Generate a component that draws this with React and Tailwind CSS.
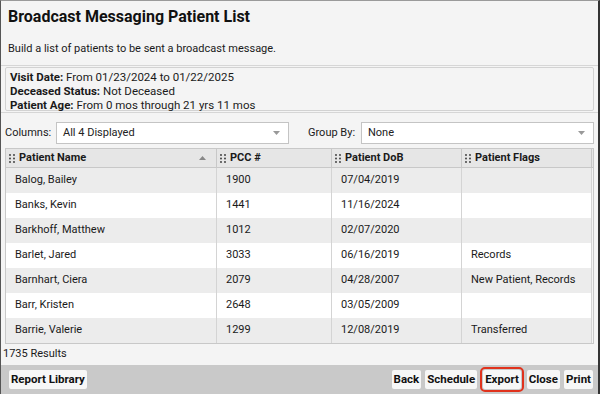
import React from "react";

const ROWS = [
  ["Balog, Bailey", "1900", "07/04/2019", ""],
  ["Banks, Kevin", "1441", "11/16/2024", ""],
  ["Barkhoff, Matthew", "1012", "02/07/2020", ""],
  ["Barlet, Jared", "3033", "06/16/2019", "Records"],
  ["Barnhart, Ciera", "2079", "04/28/2007", "New Patient, Records"],
  ["Barr, Kristen", "2648", "03/05/2009", ""],
  ["Barrie, Valerie", "1299", "12/08/2019", "Transferred"],
];

const Grip = () => (
  <svg width="6" height="9" viewBox="0 0 6 9" className="mr-1 shrink-0">
    {[1, 4.5, 8].map((y) =>
      [1, 5].map((x) => <circle key={`${x}-${y}`} cx={x} cy={y} r="0.9" fill="#333" />)
    )}
  </svg>
);

const Select = ({ value, className }) => (
  <div
    className={`h-[22px] bg-white border border-[#c4c4c4] flex items-center justify-between pl-[6px] pr-[8px] ${className}`}
  >
    <span className="text-[11px] text-[#222]">{value}</span>
    <svg width="7" height="4" viewBox="0 0 7 4">
      <path d="M0 0h7L3.5 4z" fill="#999" />
    </svg>
  </div>
);

const Btn = ({ children, highlight }) => (
  <div
    className={
      highlight
        ? "rounded-[5px] border-2 border-[#e0321c] p-[1px] mx-[1px]"
        : "p-[2px]"
    }
  >
    <div className="bg-[#f7f7f7] px-[2px] h-[19px] flex items-center text-[11.5px] font-bold text-[#111] rounded-[2px]">
      {children}
    </div>
  </div>
);

const App = () => {
  return (
    <div
      className="w-[600px] h-[394px] bg-[#f4f4f4] border-t border-t-[#9a9a9a] border-l border-l-[#555] border-r-2 border-r-[#333] flex flex-col overflow-hidden text-[#1a1a1a]"
      style={{ fontFamily: "Roboto, 'Liberation Sans', Arial, sans-serif" }}
    >
      <div className="px-[7px] pt-[6px] h-[64px]">
        <div className="text-[16px] font-bold leading-[20px] text-[#111]">
          Broadcast Messaging Patient List
        </div>
        <div className="text-[11px] mt-[15px] leading-[14px]">
          Build a list of patients to be sent a broadcast message.
        </div>
      </div>
      <div className="h-px bg-[#d6d6d6]" />
      <div className="mx-[4px] mt-[1px] border border-[#d2d2d2] rounded-[2px] px-[4px] py-[2px] text-[11.5px] leading-[14px] h-[44px]">
        <div><span className="font-bold">Visit Date:</span> From 01/23/2024 to 01/22/2025</div>
        <div><span className="font-bold">Deceased Status:</span> Not Deceased</div>
        <div><span className="font-bold">Patient Age:</span> From 0 mos through 21 yrs 11 mos</div>
      </div>
      <div className="h-px bg-[#d6d6d6] mt-[1px]" />
      <div className="flex items-center h-[22px] mt-[9px] px-[4px] text-[11px]">
        <span className="w-[51px]">Columns:</span>
        <Select value="All 4 Displayed" className="w-[233px]" />
        <span className="ml-[19px] w-[53px]">Group By:</span>
        <Select value="None" className="w-[233px]" />
      </div>
      <div className="mx-[4px] mt-[4px] border border-[#c8c8c8] text-[11px]">
        <div className="flex h-[19px] bg-[#e6e6e6] border-b border-[#c8c8c8] font-bold">
          <div className="w-[211px] flex items-center pl-[3px] pr-[10px] border-r border-[#c8c8c8]">
            <Grip />
            <span className="flex-1">Patient Name</span>
            <svg width="7" height="4" viewBox="0 0 7 4">
              <path d="M3.5 0L7 4H0z" fill="#888" />
            </svg>
          </div>
          <div className="w-[115px] flex items-center pl-[3px] border-r border-[#c8c8c8]">
            <Grip />
            PCC #
          </div>
          <div className="w-[130px] flex items-center pl-[3px] border-r border-[#c8c8c8]">
            <Grip />
            Patient DoB
          </div>
          <div className="w-[130px] flex items-center pl-[3px] border-r border-[#c8c8c8]">
            <Grip />
            Patient Flags
          </div>
          <div className="flex-1" />
        </div>
        {ROWS.map((r, i) => (
          <div
            key={r[0]}
            className={`flex h-[25px] ${i % 2 === 0 ? "bg-[#ececec]" : "bg-white"}`}
          >
            <div className="w-[211px] flex items-center pl-[9px] border-r border-[#d4d4d4]">{r[0]}</div>
            <div className="w-[115px] flex items-center pl-[9px] border-r border-[#d4d4d4]">{r[1]}</div>
            <div className="w-[130px] flex items-center pl-[9px] border-r border-[#d4d4d4]">{r[2]}</div>
            <div className="w-[130px] flex items-center pl-[9px] border-r border-[#d4d4d4]">{r[3]}</div>
            <div className="flex-1 bg-[#f4f4f4]" />
          </div>
        ))}
      </div>
      <div className="px-[2px] h-[21px] flex items-center text-[11px]">1735 Results</div>
      <div className="flex-1 bg-[#c9c9c9] flex items-center justify-between pl-[6px] pr-[3px]">
        <Btn>Report Library</Btn>
        <div className="flex items-center">
          <Btn>Back</Btn>
          <Btn>Schedule</Btn>
          <Btn highlight>Export</Btn>
          <Btn>Close</Btn>
          <Btn>Print</Btn>
        </div>
      </div>
    </div>
  );
};

export default App;
